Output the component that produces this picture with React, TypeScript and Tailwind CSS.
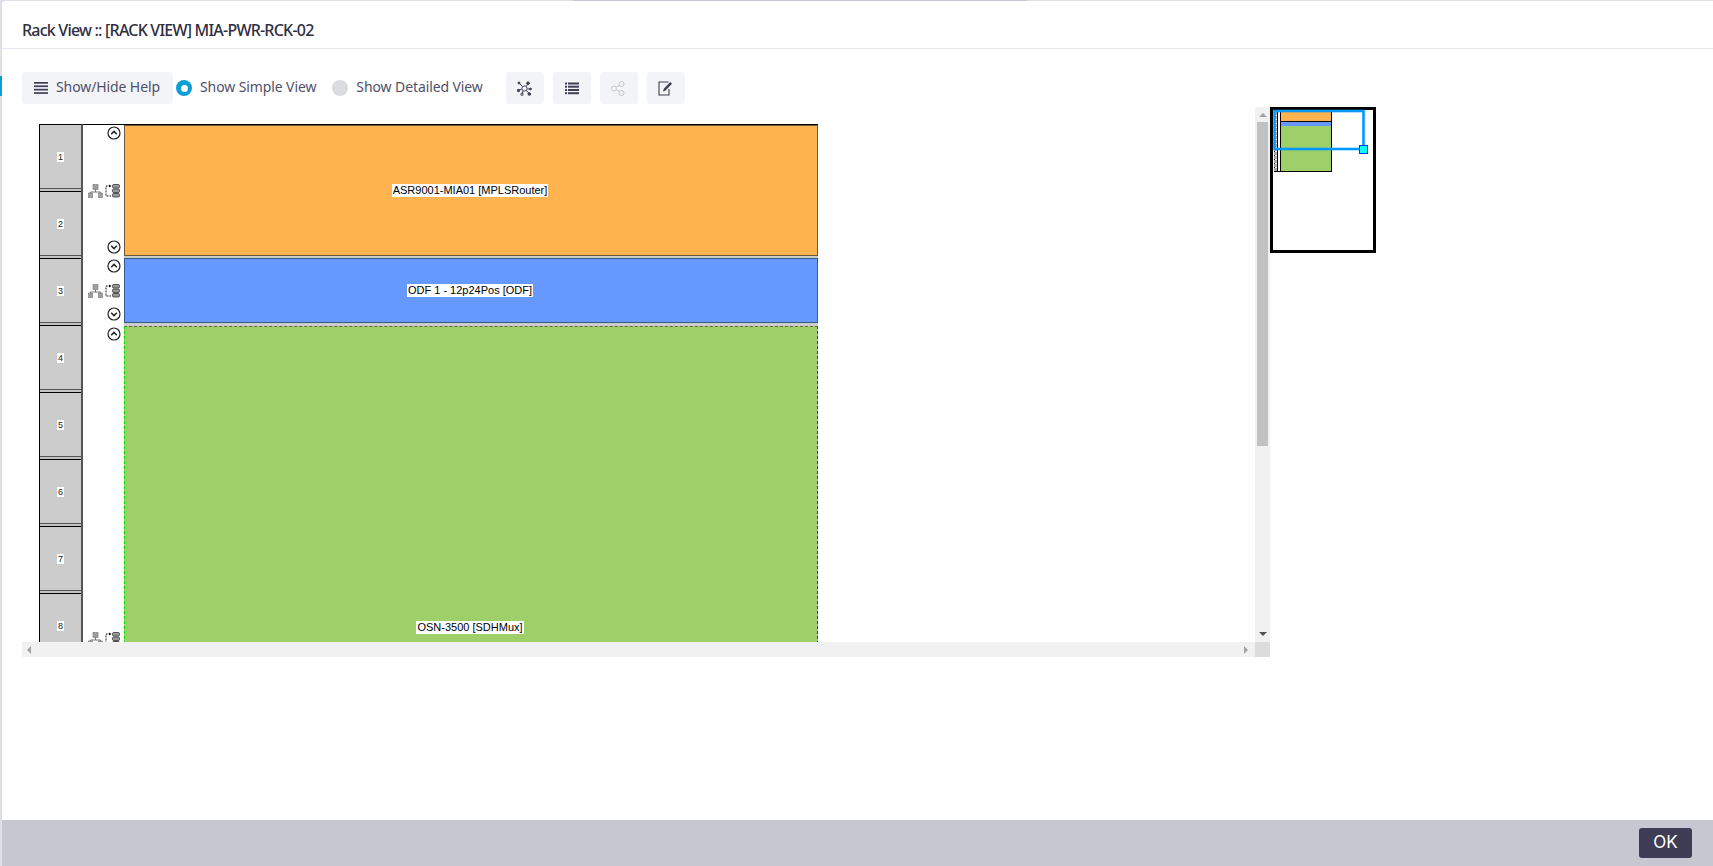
import { ReactNode } from "react";

const uiFont = "font-['Noto_Sans',sans-serif]";

type Device = {
  label: string;
  color: string;
  border: string;
  gap: string;
  iconPos: string;
  labelPos: string;
  downPos: string;
};

const DEVICES: Device[] = [
  {
    label: "ASR9001-MIA01 [MPLSRouter]",
    color: "bg-[#ffb44f]",
    border: "border border-[#6b5a3a] h-[131px]",
    gap: "pb-[2px]",
    iconPos: "top-[59px]",
    labelPos: "top-[58px]",
    downPos: "mb-[4px]",
  },
  {
    label: "ODF 1 - 12p24Pos [ODF]",
    color: "bg-[#6699ff]",
    border: "border border-[#3b5a8c] h-[65px]",
    gap: "pb-[3px]",
    iconPos: "top-[26px]",
    labelPos: "top-[25px]",
    downPos: "mb-[5px]",
  },
  {
    label: "OSN-3500 [SDHMux]",
    color: "bg-[#9ecf68]",
    border: "border border-dashed border-l-[#00e000] border-t-[#5c6a50] border-r-[#3f4a38] h-[603px]",
    gap: "",
    iconPos: "top-[306px]",
    labelPos: "top-[294px]",
    downPos: "",
  },
];

function CircleChevron({ down }: { down?: boolean }) {
  return (
    <svg width="14" height="14" viewBox="0 0 14 14" fill="none" stroke="#222" strokeWidth="1.2">
      <circle cx="7" cy="7" r="6" />
      <path d={down ? "M4.2 5.8 7 8.6l2.8-2.8" : "M4.2 8.2 7 5.4l2.8 2.8"} strokeWidth="1.5" />
    </svg>
  );
}

function NetworkTree() {
  return (
    <svg width="15" height="14" viewBox="0 0 15 14">
      <rect x="5" y="0.5" width="5" height="5" fill="#a0a0a0" stroke="#777" strokeWidth="0.6" />
      <path d="M7.5 5.5v2.5M2.5 10V8h10v2" fill="none" stroke="#666" strokeWidth="0.9" />
      <rect x="0.5" y="9" width="4" height="5" fill="#a0a0a0" stroke="#777" strokeWidth="0.6" />
      <rect x="10.5" y="9" width="4" height="5" fill="#a0a0a0" stroke="#777" strokeWidth="0.6" />
    </svg>
  );
}

function StackLink() {
  return (
    <svg width="15" height="14" viewBox="0 0 15 14">
      <path d="M5.5 2H1v10h5" fill="none" stroke="#222" strokeWidth="1" strokeDasharray="2 1" />
      <path d="M4 0.5 6.5 2 4 3.5z" fill="#111" />
      <rect x="7.5" y="0.5" width="7" height="3.5" rx="1.2" fill="#999" stroke="#333" strokeWidth="0.8" />
      <rect x="7.5" y="5" width="7" height="3.5" rx="1.2" fill="#999" stroke="#333" strokeWidth="0.8" />
      <rect x="7.5" y="9.5" width="7" height="3.5" rx="1.2" fill="#999" stroke="#333" strokeWidth="0.8" />
    </svg>
  );
}

function GraphIcon() {
  return (
    <svg width="15" height="15" viewBox="0 0 15 15" fill="#3f3d56" stroke="#3f3d56" strokeWidth="1">
      <path d="M2 2l3.5 3.5M11 2.5 9.5 5M13.5 8h-3M12 12.5 9.5 9.5M5 13l1-3M1.5 9.5 4.5 8" fill="none" />
      <circle cx="7.5" cy="7.5" r="2.6" fill="none" />
      <circle cx="2" cy="2" r="1" />
      <circle cx="11" cy="2.2" r="1.3" />
      <circle cx="13.5" cy="8" r="0.9" />
      <circle cx="12.3" cy="13" r="1.3" />
      <circle cx="5" cy="13.3" r="1.2" fill="none" />
      <circle cx="1.5" cy="9.5" r="1.2" />
    </svg>
  );
}

function ListIcon() {
  return (
    <svg width="14" height="13" viewBox="0 0 14 13" fill="#3f3d56">
      <rect x="0" y="0.5" width="2" height="2" />
      <rect x="3" y="0.5" width="11" height="2" />
      <rect x="0" y="3.7" width="2" height="2" />
      <rect x="3" y="3.7" width="11" height="2" />
      <rect x="0" y="7" width="2" height="2" />
      <rect x="3" y="7" width="11" height="2" />
      <rect x="0" y="10.2" width="2" height="2" />
      <rect x="3" y="10.2" width="11" height="2" />
    </svg>
  );
}

function ShareIcon() {
  return (
    <svg width="15" height="15" viewBox="0 0 15 15" fill="none" stroke="#c3c6d0" strokeWidth="1">
      <circle cx="10.5" cy="3" r="2.5" />
      <circle cx="3" cy="7.5" r="2.5" />
      <circle cx="10.5" cy="12" r="2.5" />
      <path d="M5.2 6.2 8.3 4.3M5.2 8.8l3.1 1.9" />
    </svg>
  );
}

function EditIcon() {
  return (
    <svg width="15" height="15" viewBox="0 0 15 15">
      <path d="M10.5 1H1v13h10V8" fill="none" stroke="#3f3d56" strokeWidth="1.1" />
      <path d="M12.2 1 14 2.8 7.5 9.5 5 10.5 5.8 7.7z" fill="#3f3d56" />
    </svg>
  );
}

function HamburgerIcon() {
  return (
    <svg width="14" height="12" viewBox="0 0 14 12" fill="#3f3d56">
      <rect y="0" width="14" height="1.7" />
      <rect y="3.4" width="14" height="1.7" />
      <rect y="6.8" width="14" height="1.7" />
      <rect y="10.2" width="14" height="1.7" />
    </svg>
  );
}

function ToolButton({ children }: { children: ReactNode }) {
  return (
    <button className="w-[38px] h-[32px] rounded-[3px] bg-[#f3f4f7] flex items-center justify-center">{children}</button>
  );
}

function RackUnit({ n }: { n: number }) {
  return (
    <div className="h-[67px] shrink-0 flex flex-col">
      <div className="h-[64px] bg-[#cccccc] border-b border-[#555] flex items-center justify-center">
        <span className="bg-white px-[1px] text-[9px] leading-[10px] text-[#222] font-['Liberation_Sans',sans-serif]">
          {n}
        </span>
      </div>
      <div className="h-[2px] bg-[#c4c4c4]" />
      <div className="h-[1px] bg-black" />
    </div>
  );
}

function DeviceRow({ device }: { device: Device }) {
  return (
    <div className="flex">
      <div className="relative w-[41px] shrink-0 flex flex-col justify-between items-end pr-[3px]">
        <div className="mt-[1px]">
          <CircleChevron />
        </div>
        <div className={`absolute left-[5px] flex gap-[2px] ${device.iconPos}`}>
          <NetworkTree />
          <StackLink />
        </div>
        {device.downPos ? (
          <div className={device.downPos}>
            <CircleChevron down />
          </div>
        ) : null}
      </div>
      <div className={`w-[694px] bg-[#cccccc] ${device.gap}`}>
        <div className={`relative ${device.color} ${device.border}`}>
          <div className={`absolute inset-x-0 pr-[2px] flex justify-center ${device.labelPos}`}>
            <span className="bg-white px-[1px] text-[11px] leading-[13px] text-black font-['Liberation_Sans',sans-serif]">
              {device.label}
            </span>
          </div>
        </div>
      </div>
    </div>
  );
}

function Minimap() {
  return (
    <svg width="106" height="146" viewBox="0 0 106 146" className="shrink-0">
      <rect x="1.5" y="1.5" width="103" height="143" fill="#fff" stroke="#000" strokeWidth="3" />
      <rect x="4.5" y="4.5" width="57" height="60" fill="#fff" stroke="#000" />
      <rect x="11" y="5" width="50" height="9" fill="#ffb44f" />
      <rect x="11" y="14" width="50" height="1" fill="#000" />
      <rect x="11" y="15" width="50" height="4" fill="#6699ff" />
      <rect x="11" y="19" width="50" height="45" fill="#9ecf68" />
      <path d="M7.5 5V64M10.5 5V64" stroke="#000" strokeWidth="1" />
      <path d="M5.5 5V64" stroke="#aaa" strokeWidth="3" strokeDasharray="3 1" />
      <rect x="4.5" y="4" width="89" height="38" fill="none" stroke="#0099ff" strokeWidth="2.6" />
      <rect x="89.5" y="38.5" width="8" height="8" fill="#00ffff" stroke="#0033ff" />
    </svg>
  );
}

export default function App() {
  return (
    <div className="relative h-[866px] w-[1713px] overflow-hidden bg-[#dfe0e6] pl-[2px] pt-[1px]">
      <div className="absolute left-[573px] top-0 w-[454px] h-[1px] bg-[#c6c7d1]" />
      <div className="absolute left-0 top-[76px] w-[2px] h-[20px] bg-[#0b9dd6]" />
      <div className={`h-[865px] w-[1711px] bg-white flex flex-col rounded-tl-[3px] ${uiFont}`}>
        <div className="h-[48px] shrink-0 border-b border-[#e4e6ef] pl-[20px] flex items-center">
          <h1 className="text-[16px] font-medium tracking-[-0.78px] text-[#2f2e41] mt-[11px]">
            Rack View :: [RACK VIEW] MIA-PWR-RCK-02
          </h1>
        </div>

        <div className="flex-1 pl-[20px] pt-[23px]">
          <div className="flex items-center h-[32px] text-[14px] tracking-[-0.1px] text-[#51506a]">
            <button className="w-[151px] h-[32px] rounded-[3px] bg-[#f3f4f7] flex items-center gap-[8px] pl-[12px]">
              <HamburgerIcon />
              <span className="mt-[-3px]">Show/Hide Help</span>
            </button>
            <div className="ml-[3px] w-[16px] h-[16px] rounded-full bg-[#0b9dd6] flex items-center justify-center">
              <div className="w-[7px] h-[7px] rounded-full bg-white" />
            </div>
            <span className="ml-[8px] mt-[-3px]">Show Simple View</span>
            <div className="ml-[16px] w-[16px] h-[16px] rounded-full bg-[#d9dce1]" />
            <span className="ml-[8px] mt-[-3px]">Show Detailed View</span>
            <div className="ml-[23px] flex gap-[9px]">
              <ToolButton>
                <GraphIcon />
              </ToolButton>
              <ToolButton>
                <ListIcon />
              </ToolButton>
              <ToolButton>
                <ShareIcon />
              </ToolButton>
              <ToolButton>
                <EditIcon />
              </ToolButton>
            </div>
          </div>

          <div className="flex mt-[3px] items-start">
            <div className="w-[1248px] h-[550px] shrink-0 grid grid-cols-[1233px_15px] grid-rows-[535px_15px]">
              <div className="overflow-hidden pl-[17px] pt-[17px]">
                <div className="flex items-start">
                  <div className="w-[44px] shrink-0 border-t border-l border-black border-r-2 border-r-[#555]">
                    {[1, 2, 3, 4, 5, 6, 7, 8].map((n) => (
                      <RackUnit key={n} n={n} />
                    ))}
                  </div>
                  <div className="flex flex-col border-t border-black">
                    {DEVICES.map((d) => (
                      <DeviceRow key={d.label} device={d} />
                    ))}
                  </div>
                </div>
              </div>

              <div className="bg-[#f1f1f1] flex flex-col items-center">
                <div className="mt-[6px] w-0 h-0 border-x-[4px] border-x-transparent border-b-[4px] border-b-[#a3a3a3]" />
                <div className="mt-[5px] w-[11px] h-[324px] bg-[#c1c1c1]" />
                <div className="mt-auto mb-[6px] w-0 h-0 border-x-[4px] border-x-transparent border-t-[4px] border-t-[#505050]" />
              </div>

              <div className="bg-[#f1f1f1] flex items-center justify-between px-[5px]">
                <div className="w-0 h-0 border-y-[4px] border-y-transparent border-r-[4px] border-r-[#a3a3a3]" />
                <div className="mr-[2px] w-0 h-0 border-y-[4px] border-y-transparent border-l-[4px] border-l-[#a3a3a3]" />
              </div>
              <div className="bg-[#dcdcdc]" />
            </div>
            <Minimap />
          </div>
        </div>

        <div className="h-[46px] shrink-0 bg-[#c6c7d1] flex items-center justify-end pr-[21px]">
          <button className="w-[53px] h-[30px] rounded-[3px] bg-[#3f3d56] text-white text-[17px] font-['Inter',sans-serif]">
            OK
          </button>
        </div>
      </div>
    </div>
  );
}
